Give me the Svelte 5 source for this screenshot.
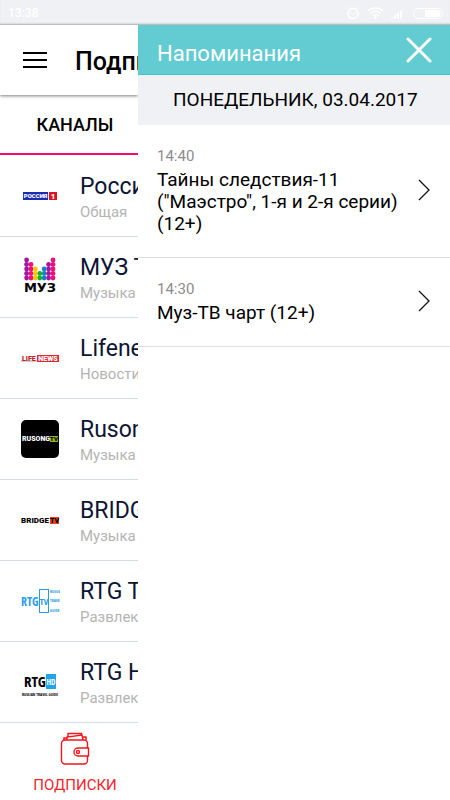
<script>
  const channels = [
    { name: 'Россия 1', genre: 'Общая', logo: 'russia' },
    { name: 'МУЗ ТВ', genre: 'Музыка', logo: 'muz' },
    { name: 'Lifenews', genre: 'Новости', logo: 'life' },
    { name: 'Rusong TV', genre: 'Музыка', logo: 'rusong' },
    { name: 'BRIDGE TV', genre: 'Музыка', logo: 'bridge' },
    { name: 'RTG TV', genre: 'Развлекательные', logo: 'rtgtv' },
    { name: 'RTG HD', genre: 'Развлекательные', logo: 'rtghd' }
  ];

  const reminders = [
    { time: '14:40', title: 'Тайны следствия-11 ("Маэстро", 1-я и 2-я серии) (12+)' },
    { time: '14:30', title: 'Муз-ТВ чарт (12+)' }
  ];

  // dot columns of the MUZ logo: colour and number of dots, bottom up
  const muzColumns = [
    { color: '#a216a6', count: 5 },
    { color: '#ef0f78', count: 4 },
    { color: '#ffc400', count: 3 },
    { color: '#12b32c', count: 2 },
    { color: '#1681c4', count: 3 },
    { color: '#a216a6', count: 4 },
    { color: '#ef0f78', count: 5 }
  ];
</script>

<div class="app">
  <div class="status">
    <span>13:38</span>
    <svg width="98" height="14" viewBox="0 0 98 14" fill="none" stroke="#fff" aria-hidden="true">
      <circle cx="7" cy="7.5" r="5" stroke-width="1.5" />
      <path d="M4.5 6.5l2.5 2 2.5-2M1 3l2.5-2M13 3l-2.5-2" />
      <path d="M22 5c4-4 11-4 15 0M24.5 7.5c3-3 7-3 10 0M27 10c1.5-1.5 4-1.5 5.5 0" stroke-width="1.5" />
      <circle cx="29.5" cy="11.5" r="1" fill="#fff" />
      <path d="M44 12.5h3v-2zM48 12.5h2v-4l-2 1zM51 12.5h2v-6l-2 1zM54 12.5h2v-8l-2 1z" fill="#fff" stroke="none" />
      <rect x="67.5" y="2.5" width="29" height="10" rx="5" />
      <path d="M79 4h12a3.5 3.5 0 0 1 0 7h-12z" fill="#fff" stroke="none" />
    </svg>
  </div>

  <div class="screen">
    <div class="main">
      <header class="topbar">
        <button class="icon-button" aria-label="Меню">
          <svg width="24" height="18" viewBox="0 0 24 18" stroke="#000" stroke-width="2">
            <path d="M0 2h24M0 9h24M0 16h24" />
          </svg>
        </button>
        <h1>Подписки</h1>
      </header>

      <nav class="tabs">
        <button class="tab">КАНАЛЫ</button>
      </nav>

      <ul class="channels">
        {#each channels as channel}
          <li>
            <svg class="logo" width="40" height="40" viewBox="0 0 40 40" role="img" aria-label={channel.name}>
              {#if channel.logo === 'russia'}
                <rect x="3" y="16" width="25" height="8" fill="#1a2cb4" />
                <rect x="29" y="16" width="8" height="8" fill="#dd1420" />
                <text x="15.5" y="22" font-size="6" font-weight="900" text-anchor="middle" fill="#fff">РОССИЯ</text>
                <text x="33" y="23" font-size="8" font-weight="900" text-anchor="middle" fill="#fff">1</text>
              {:else if channel.logo === 'muz'}
                {#each muzColumns as column, i}
                  {#each Array(column.count) as _, j}
                    <circle cx={6.6 + i * 4.4} cy={21 - j * 4.5} r="2.4" fill={column.color} />
                  {/each}
                {/each}
                <text x="20" y="35" font-size="13" font-weight="700" text-anchor="middle" class="wide">МУЗ</text>
              {:else if channel.logo === 'life'}
                <rect x="1" y="22" width="17" height="2" fill="#ccc" />
                <rect x="17" y="17" width="22" height="7" fill="#e02830" />
                <text x="2" y="23" font-size="7" font-weight="900" fill="#c81c24">LIFE</text>
                <text x="28" y="23" font-size="7" font-weight="900" text-anchor="middle" fill="#fff">NEWS</text>
              {:else if channel.logo === 'rusong'}
                <rect x="1" y="1" width="38" height="38" rx="5" />
                <text x="2" y="22" font-size="7" font-weight="900" fill="#fff">RUSONG</text>
                <rect x="30" y="17" width="8" height="6" fill="#8db52c" />
                <text x="34" y="22" font-size="6" font-weight="900" text-anchor="middle">TV</text>
              {:else if channel.logo === 'bridge'}
                <text x="1" y="23" font-size="8" font-weight="900">BRIDGE</text>
                <rect x="30" y="17" width="9" height="7" fill="#f0431e" />
                <text x="34.5" y="23" font-size="7" font-weight="900" text-anchor="middle">TV</text>
              {:else if channel.logo === 'rtgtv'}
                <text x="1" y="25" font-size="12" font-weight="700" fill="#279be8" class="narrow">RTG</text>
                <rect x="19.5" y="8.5" width="9" height="23" fill="#fff" stroke="#279be8" />
                <text x="24" y="24" font-size="9" font-weight="700" text-anchor="middle" fill="#279be8" class="narrow">TV</text>
                <g font-size="4" font-weight="700" fill="#279be8">
                  <text x="30" y="12" class="narrow">RUSSIAN</text>
                  <text x="30" y="21" class="narrow">TRAVEL</text>
                  <text x="30" y="31" class="narrow">GUIDE</text>
                </g>
              {:else}
                <text x="4" y="25" font-size="15" font-weight="700" class="narrow">RTG</text>
                <rect x="26" y="12" width="10" height="15" fill="#22a5e6" />
                <text x="31" y="23" font-size="8" font-weight="700" text-anchor="middle" fill="#fff" class="narrow">HD</text>
                <text x="20" y="34" font-size="4" font-weight="700" text-anchor="middle" class="narrow">RUSSIAN TRAVEL GUIDE</text>
              {/if}
            </svg>
            <div class="info">
              <span class="name">{channel.name}</span>
              <span class="genre">{channel.genre}</span>
            </div>
          </li>
        {/each}
      </ul>

      <footer>
        <button class="bottom-tab">
          <svg width="30" height="34" viewBox="0 0 30 34" fill="none" stroke="#f5151d" stroke-width="1.4">
            <rect x="1.5" y="8" width="26" height="24" rx="3.5" />
            <path d="M4 8V6h3M26 8V5h-3" />
            <path d="M7 8V5l15-2 1 5M8 4.5V1.5h13.500V3" />
            <path d="M28.5 16H18a4 4 0 0 0 0 8h10.500z" fill="#fff" />
            <circle cx="18" cy="20" r="1.5" />
          </svg>
          ПОДПИСКИ
        </button>
      </footer>
    </div>

    <aside class="drawer">
      <div class="drawer-head">
        <h2>Напоминания</h2>
        <button class="icon-button" aria-label="Закрыть">
          <svg width="26" height="26" viewBox="0 0 26 26" stroke="#fff" stroke-width="3" stroke-linecap="round">
            <path d="M2 2l22 22M24 2L2 24" />
          </svg>
        </button>
      </div>
      <p class="date">ПОНЕДЕЛЬНИК, 03.04.2017</p>
      {#each reminders as reminder}
        <button class="reminder">
          <span class="reminder-text">
            <span class="time">{reminder.time}</span>
            <span class="title">{reminder.title}</span>
          </span>
          <svg width="12" height="22" viewBox="0 0 12 22" fill="none" stroke="#111" stroke-width="1.3">
            <path d="M1 1l10 10L1 21" />
          </svg>
        </button>
      {/each}
    </aside>
  </div>
</div>

<style>
  :global(body) {
    margin: 0;
    background: #fff;
  }

  .app {
    display: flex;
    flex-direction: column;
    min-height: 100vh;
    font-family: Roboto, sans-serif;
    color: #000;
  }

  button {
    border: none;
    background: none;
    padding: 0;
    font-family: inherit;
    color: inherit;
    cursor: pointer;
  }

  svg {
    display: block;
    flex: none;
  }

  .status {
    display: flex;
    align-items: center;
    justify-content: space-between;
    height: 25px;
    box-sizing: border-box;
    padding: 0 6px 0 8px;
    background: #f0f1f4;
    box-shadow: inset 0 -2px 2px -1px #aaa;
    color: #fff;
    font-size: 12px;
    font-weight: 500;
  }

  .screen {
    flex: 1;
    display: grid;
    grid-template-columns: 138px 1fr;
  }

  .main {
    display: flex;
    flex-direction: column;
    overflow: hidden;
    white-space: nowrap;
  }

  .topbar {
    display: flex;
    align-items: center;
    gap: 28px;
    height: 70px;
    padding-left: 23px;
    box-shadow: 0 1px 3px rgba(0, 0, 0, 0.5);
  }

  h1 {
    margin: 0;
    padding-top: 2px;
    font-size: 25px;
    font-weight: 500;
  }

  .tabs {
    display: flex;
    height: 60px;
  }

  .tab {
    flex: none;
    width: 150px;
    border-bottom: 2px solid #fa0a6e;
    font-size: 18px;
    font-weight: 500;
  }

  .channels {
    margin: 0;
    padding: 1px 0 0;
    list-style: none;
  }

  .channels li {
    display: flex;
    align-items: center;
    gap: 20px;
    height: 80px;
    padding-left: 20px;
    border-bottom: 1px solid #d5dce4;
  }

  .logo {
    font-family: Roboto, sans-serif;
  }

  .wide {
    font-family: "DejaVu Sans", sans-serif;
  }

  .narrow {
    font-family: "Liberation Sans Narrow", "Open Sans Condensed", Roboto, sans-serif;
  }

  .info {
    display: flex;
    flex-direction: column;
    padding-top: 4px;
  }

  .name {
    font-size: 23px;
    line-height: 28px;
    color: #0c1434;
  }

  .genre {
    font-size: 15px;
    line-height: 22px;
    color: #b4b4b4;
  }

  footer {
    display: flex;
    flex: 1;
  }

  .bottom-tab {
    display: flex;
    flex: none;
    flex-direction: column;
    align-items: center;
    gap: 8px;
    width: 150px;
    padding-top: 9px;
    font-size: 15px;
    line-height: 22px;
    color: #f5232b;
  }

  .drawer {
    display: flex;
    flex-direction: column;
    background: #fff;
  }

  .drawer-head {
    display: flex;
    align-items: center;
    justify-content: space-between;
    height: 50px;
    box-sizing: border-box;
    padding: 0 18px 0 19px;
    border-bottom: 1px solid #3cc4cc;
    background: #62ccd2;
    color: #fff;
  }

  h2 {
    margin: 0;
    padding-top: 8px;
    font-size: 22px;
    font-weight: 400;
  }

  .date {
    margin: 0;
    padding-left: 35px;
    background: #f0f1f4;
    font-size: 19px;
    line-height: 50px;
  }

  .reminder {
    display: flex;
    align-items: center;
    justify-content: space-between;
    gap: 10px;
    padding: 20px 20px 22px 19px;
    border-bottom: 1px solid #d9dee3;
    text-align: left;
  }

  .reminder-text {
    display: flex;
    flex-direction: column;
    gap: 2px;
    line-height: 22px;
  }

  .time {
    font-size: 15px;
    color: #8c8c90;
  }

  .title {
    font-size: 19px;
  }
</style>
